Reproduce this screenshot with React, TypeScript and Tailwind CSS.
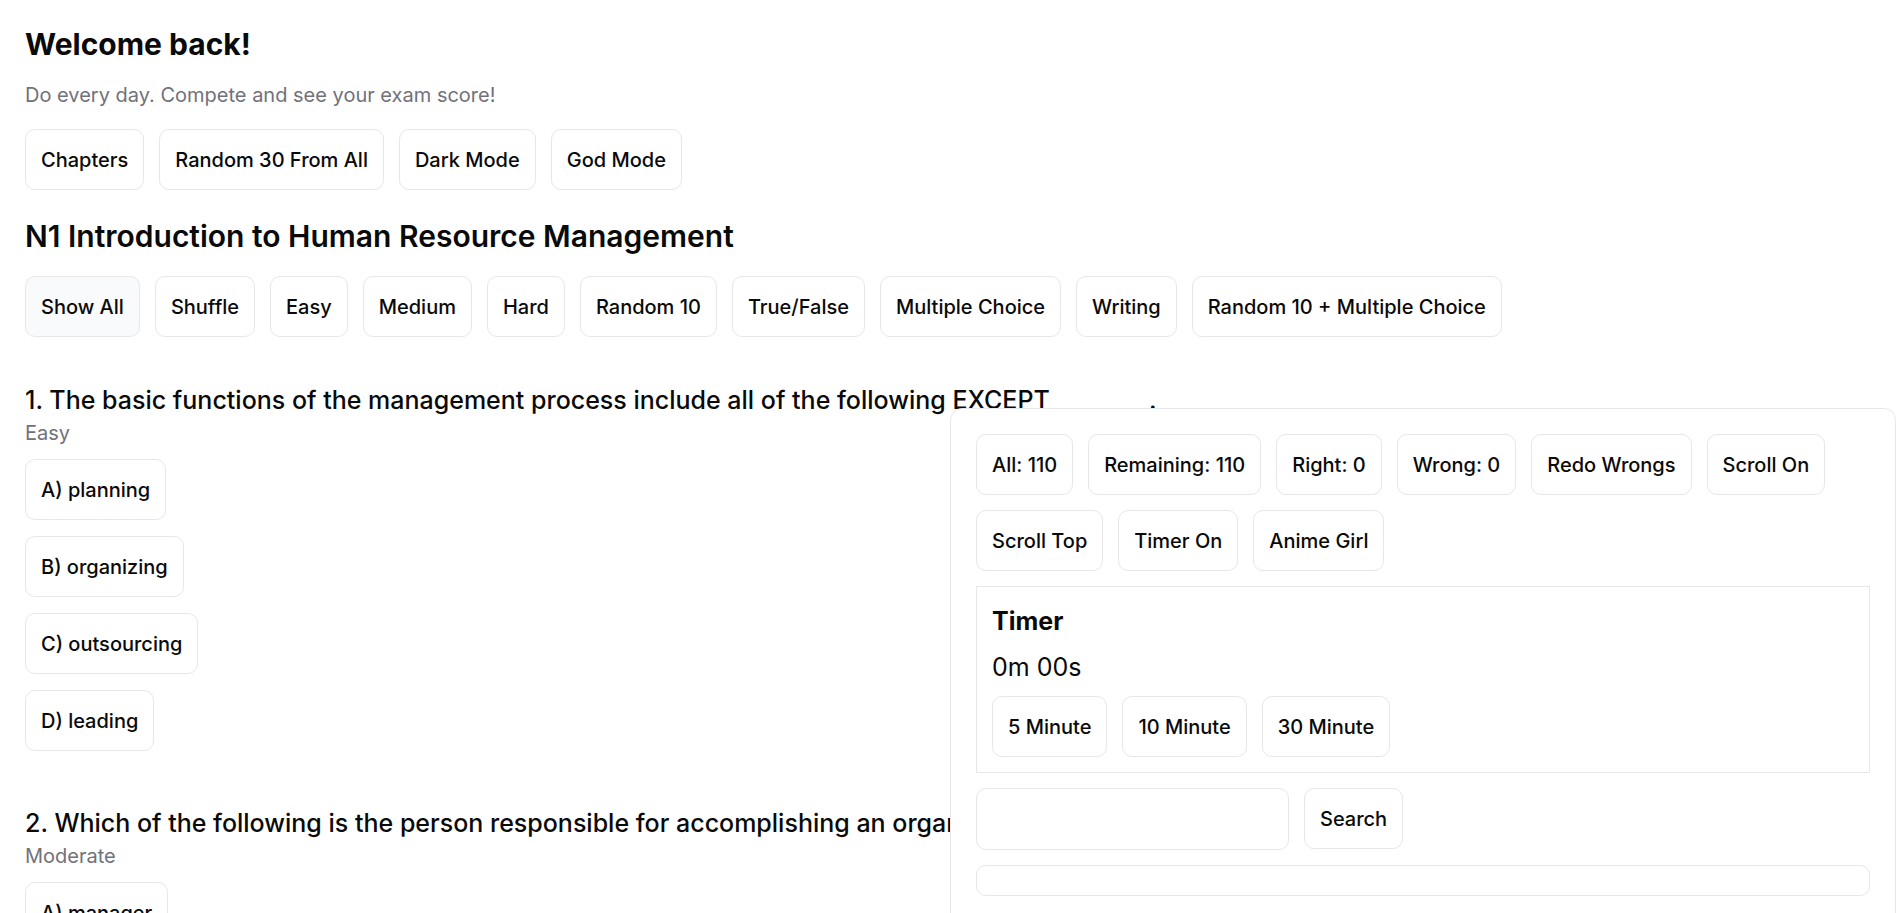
import React from "react";

const Btn = ({ children, active = false }: { children: React.ReactNode; active?: boolean }) => (
  <button
    className={
      "h-[61px] px-[15px] rounded-[10px] border border-[#e5e7eb] text-[20px] leading-[28px] font-medium text-[#0a0a0a] flex items-center whitespace-nowrap " +
      (active ? "bg-[#f9fafb]" : "bg-white")
    }
  >
    {children}
  </button>
);

const Question = ({
  title,
  level,
  options,
  className = "",
}: {
  title: string;
  level: string;
  options: string[];
  className?: string;
}) => (
  <div className={className}>
    <div className="text-[25px] leading-[32px] font-medium text-[#0a0a0a] whitespace-nowrap">{title}</div>
    <div className="mt-[3px] text-[20px] leading-[28px] text-[#71717a]">{level}</div>
    <div className="mt-[12px] flex flex-col items-start gap-[16px]">
      {options.map((o) => (
        <Btn key={o}>{o}</Btn>
      ))}
    </div>
  </div>
);

export default function App() {
  return (
    <div className="relative min-h-screen overflow-hidden bg-white font-['Inter',sans-serif] text-[#0a0a0a]">
      <div className="pt-[26px] px-[25px] h-[913px] overflow-hidden">
        <h1 className="text-[30px] leading-[36px] font-bold">Welcome back!</h1>
        <p className="mt-[19px] text-[20px] leading-[28px] text-[#71717a]">
          Do every day. Compete and see your exam score!
        </p>
        <div className="mt-[20px] flex flex-wrap gap-[15px]">
          <Btn>Chapters</Btn>
          <Btn>Random 30 From All</Btn>
          <Btn>Dark Mode</Btn>
          <Btn>God Mode</Btn>
        </div>
        <h2 className="mt-[28px] text-[30px] leading-[36px] font-semibold">
          N1 Introduction to Human Resource Management
        </h2>
        <div className="mt-[22px] flex flex-wrap gap-[15px]">
          <Btn active>Show All</Btn>
          <Btn>Shuffle</Btn>
          <Btn>Easy</Btn>
          <Btn>Medium</Btn>
          <Btn>Hard</Btn>
          <Btn>Random 10</Btn>
          <Btn>True/False</Btn>
          <Btn>Multiple Choice</Btn>
          <Btn>Writing</Btn>
          <Btn>Random 10 + Multiple Choice</Btn>
        </div>
        <Question
          className="mt-[47px]"
          title="1. The basic functions of the management process include all of the following EXCEPT ________."
          level="Easy"
          options={["A) planning", "B) organizing", "C) outsourcing", "D) leading"]}
        />
        <Question
          className="mt-[56px]"
          title="2. Which of the following is the person responsible for accomplishing an organization's goals?"
          level="Moderate"
          options={["A) manager", "B) employee", "C) recruiter", "D) supervisor"]}
        />
      </div>

      <div className="fixed left-[950px] top-[408px] w-[946px] h-[700px] rounded-[12px] border border-[#e5e7eb] bg-white p-[25px]">
        <div className="flex flex-wrap gap-[15px]">
          <Btn>All: 110</Btn>
          <Btn>Remaining: 110</Btn>
          <Btn>Right: 0</Btn>
          <Btn>Wrong: 0</Btn>
          <Btn>Redo Wrongs</Btn>
          <Btn>Scroll On</Btn>
          <Btn>Scroll Top</Btn>
          <Btn>Timer On</Btn>
          <Btn>Anime Girl</Btn>
        </div>
        <div className="mt-[15px] border border-[#e5e7eb] p-[15px] flex flex-col">
          <div className="mt-[3px] text-[25px] leading-[32px] font-bold">Timer</div>
          <div className="mt-[14px] text-[25px] leading-[32px]">0m 00s</div>
          <div className="mt-[13px] flex gap-[15px]">
            <Btn>5 Minute</Btn>
            <Btn>10 Minute</Btn>
            <Btn>30 Minute</Btn>
          </div>
        </div>
        <div className="mt-[15px] flex gap-[15px]">
          <input className="h-[62px] w-[313px] rounded-[10px] border border-[#e5e7eb] px-4 text-[20px] outline-none" />
          <Btn>Search</Btn>
        </div>
        <div className="mt-[15px] h-[31px] rounded-[10px] border border-[#e5e7eb]" />
      </div>
    </div>
  );
}
